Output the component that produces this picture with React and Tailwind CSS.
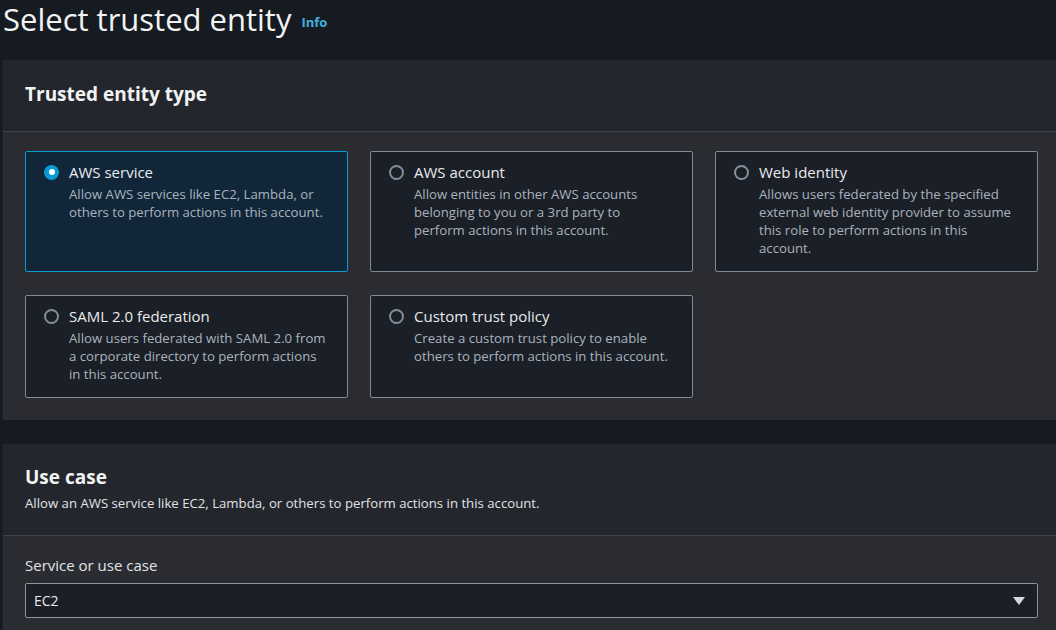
import React, { useState } from "react";

const options = [
  {
    id: "aws-service",
    title: "AWS service",
    desc: "Allow AWS services like EC2, Lambda, or others to perform actions in this account.",
  },
  {
    id: "aws-account",
    title: "AWS account",
    desc: "Allow entities in other AWS accounts belonging to you or a 3rd party to perform actions in this account.",
  },
  {
    id: "web-identity",
    title: "Web identity",
    desc: "Allows users federated by the specified external web identity provider to assume this role to perform actions in this account.",
  },
  {
    id: "saml",
    title: "SAML 2.0 federation",
    desc: "Allow users federated with SAML 2.0 from a corporate directory to perform actions in this account.",
  },
  {
    id: "custom",
    title: "Custom trust policy",
    desc: "Create a custom trust policy to enable others to perform actions in this account.",
  },
];

const Tile = ({ option, selected, onSelect }) => (
  <button
    type="button"
    onClick={() => onSelect(option.id)}
    className={`flex items-start text-left rounded-[2px] border pl-[18px] pr-[21px] pt-[9px] pb-[14px] ${
      selected ? "border-[#0a9bd3] bg-[#12263a]" : "border-[#7f8a97] bg-[#1b1f27]"
    }`}
  >
    {/* Radio */}
    <span className="h-[22px] flex items-center shrink-0">
      {selected ? (
        <span className="w-[15px] h-[15px] rounded-full bg-[#0a9bd3] flex items-center justify-center">
          <span className="w-[6px] h-[6px] rounded-full bg-white" />
        </span>
      ) : (
        <span className="w-[15px] h-[15px] rounded-full border-2 border-[#858e99]" />
      )}
    </span>
    <span className="ml-[10px] flex flex-col">
      <span className="text-[15px] leading-[22px] text-[#e9ebed]">{option.title}</span>
      <span className="mt-[2px] text-[13.2px] leading-[18px] text-[#aab3bd]">{option.desc}</span>
    </span>
  </button>
);

const App = () => {
  const [selected, setSelected] = useState("aws-service");

  return (
    <div className="min-h-screen bg-[#161a21] font-['Open_Sans',sans-serif]">
      {/* Page title */}
      <div className="h-[60px] flex items-start pl-[3px]">
        <h1 className="text-[31px] leading-[38px] text-[#f2f3f3] font-normal">Select trusted entity</h1>
        <span className="ml-[10px] mt-[13px] text-[13px] font-bold text-[#3fb0e0]">Info</span>
      </div>

      {/* Trusted entity type */}
      <div className="ml-[2px] bg-[#2a2c31] border-l border-[#1c1f25]">
        <div className="h-[72px] pt-[22px] px-[22px] bg-[#23262d] border-b border-[#3d4148]">
          <h2 className="text-[19px] leading-[24px] font-bold text-[#f2f3f3]">Trusted entity type</h2>
        </div>
        <div className="pl-[22px] pt-[19px] pb-[22px]">
          <div className="w-[1013px] grid grid-cols-3 gap-x-[22px] gap-y-[23px]">
            {options.map((o) => (
              <Tile key={o.id} option={o} selected={selected === o.id} onSelect={setSelected} />
            ))}
          </div>
        </div>
      </div>

      {/* Use case */}
      <div className="mt-[24px] ml-[2px] bg-[#2a2c31] border-l border-[#1c1f25]">
        <div className="pt-[21px] pb-[23px] px-[22px] bg-[#23262d] border-b border-[#3d4148]">
          <h2 className="text-[19px] leading-[24px] font-bold text-[#f2f3f3]">Use case</h2>
          <p className="mt-[5px] text-[13.2px] leading-[18px] text-[#e0e3e6]">
            Allow an AWS service like EC2, Lambda, or others to perform actions in this account.
          </p>
        </div>
        <div className="pl-[22px] pt-[18px] pb-[20px]">
          <label className="block text-[15px] leading-[22px] text-[#e0e3e6]">Service or use case</label>
          <div className="mt-[7px] w-[1013px] h-[35px] flex items-center justify-between rounded-[2px] border border-[#8d969f] bg-[#1b1f27] pl-[8px] pr-[11px]">
            <span className="text-[14px] text-[#e9ebed]">EC2</span>
            <svg width="14" height="10" viewBox="0 0 14 10">
              <path d="M1 1h12L7 9z" fill="#d5d9dd" />
            </svg>
          </div>
        </div>
      </div>
    </div>
  );
};

export default App;
